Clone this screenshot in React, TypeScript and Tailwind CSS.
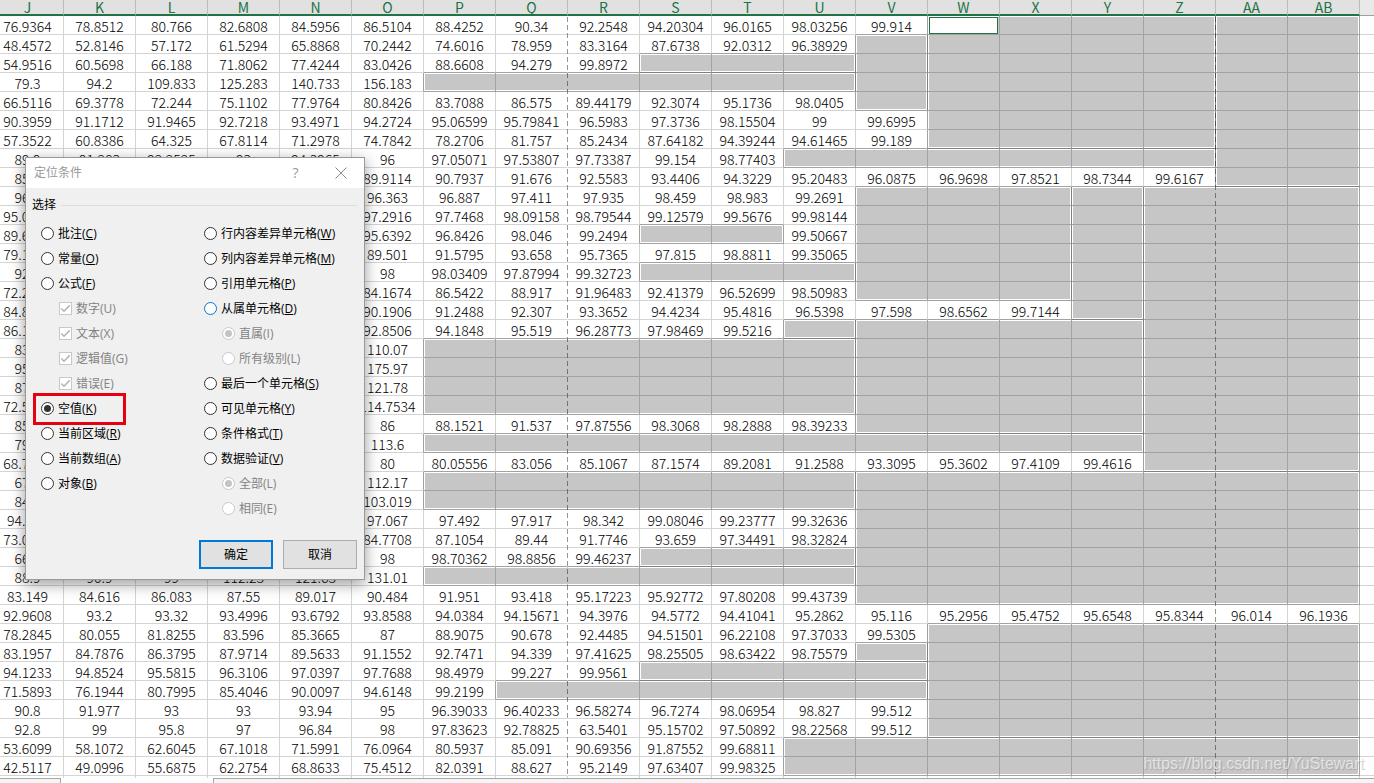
import React from 'react';
import clsx from 'clsx';

const COLUMNS = ['J', 'K', 'L', 'M', 'N', 'O', 'P', 'Q', 'R', 'S', 'T', 'U', 'V', 'W', 'X', 'Y', 'Z', 'AA', 'AB'];

// One line per sheet row, values separated by spaces, "-" marks an empty cell.
const ROWS: string[][] = `
76.9364 78.8512 80.766 82.6808 84.5956 86.5104 88.4252 90.34 92.2548 94.20304 96.0165 98.03256 99.914
48.4572 52.8146 57.172 61.5294 65.8868 70.2442 74.6016 78.959 83.3164 87.6738 92.0312 96.38929
54.9516 60.5698 66.188 71.8062 77.4244 83.0426 88.6608 94.279 99.8972
79.3 94.2 109.833 125.283 140.733 156.183
66.5116 69.3778 72.244 75.1102 77.9764 80.8426 83.7088 86.575 89.44179 92.3074 95.1736 98.0405
90.3959 91.1712 91.9465 92.7218 93.4971 94.2724 95.06599 95.79841 96.5983 97.3736 98.15504 99 99.6995
57.3522 60.8386 64.325 67.8114 71.2978 74.7842 78.2706 81.757 85.2434 87.64182 94.39244 94.61465 99.189
89.9 91.283 92.2525 93 94.3965 96 97.05071 97.53807 97.73387 99.154 98.77403
85.5 - - - - 89.9114 90.7937 91.676 92.5583 93.4406 94.3229 95.20483 96.0875 96.9698 97.8521 98.7344 99.6167
96.1 - - - - 96.363 96.887 97.411 97.935 98.459 98.983 99.2691
95.0164 - - - - 97.2916 97.7468 98.09158 98.79544 99.12579 99.5676 99.98144
89.6216 - - - - 95.6392 96.8426 98.046 99.2494 - - 99.50667
79.1085 - - - - 89.501 91.5795 93.658 95.7365 97.815 98.8811 99.35065
92.5 - - - - 98 98.03409 97.87994 99.32723
72.2944 - - - - 84.1674 86.5422 88.917 91.96483 92.41379 96.52699 98.50983
84.8996 - - - - 90.1906 91.2488 92.307 93.3652 94.4234 95.4816 96.5398 97.598 98.6562 99.7144
86.1796 - - - - 92.8506 94.1848 95.519 96.28773 97.98469 99.5216
83.6 - - - - 110.07
95.2 - - - - 175.97
87.4 - - - - 121.78
72.5934 - - - - 114.7534
85.5 - - - - 86 88.1521 91.537 97.87556 98.3068 98.2888 98.39233
79.8 - - - - 113.6
68.7526 - - - - 80 80.05556 83.056 85.1067 87.1574 89.2081 91.2588 93.3095 95.3602 97.4109 99.4616
67.2 - - - - 112.17
84.6 - - - - 103.019
94.942 - - - - 97.067 97.492 97.917 98.342 99.08046 99.23777 99.32636
73.0978 - - - - 84.7708 87.1054 89.44 91.7746 93.659 97.34491 98.32824
66.8 - - - - 98 98.70362 98.8856 99.46237
88.9 90.9 99 112.23 121.63 131.01
83.149 84.616 86.083 87.55 89.017 90.484 91.951 93.418 95.17223 95.92772 97.80208 99.43739
92.9608 93.2 93.32 93.4996 93.6792 93.8588 94.0384 94.15671 94.3976 94.5772 94.41041 95.2862 95.116 95.2956 95.4752 95.6548 95.8344 96.014 96.1936
78.2845 80.055 81.8255 83.596 85.3665 87 88.9075 90.678 92.4485 94.51501 96.22108 97.37033 99.5305
83.1957 84.7876 86.3795 87.9714 89.5633 91.1552 92.7471 94.339 97.41625 98.25505 98.63422 98.75579
94.1233 94.8524 95.5815 96.3106 97.0397 97.7688 98.4979 99.227 99.9561
71.5893 76.1944 80.7995 85.4046 90.0097 94.6148 99.2199
90.8 91.977 93 93 93.94 95 96.39033 96.40233 96.58274 96.7274 98.06954 98.827 99.512
92.8 99 95.8 97 96.84 98 97.83623 92.78825 63.5401 95.15702 97.50892 98.22568 99.512
53.6099 58.1072 62.6045 67.1018 71.5991 76.0964 80.5937 85.091 90.69356 91.87552 99.68811
42.5117 49.0996 55.6875 62.2754 68.8633 75.4512 82.0391 88.627 95.2149 97.63407 99.98325
`
  .trim()
  .split('\n')
  .map((line) => line.split(' ').map((v) => (v === '-' ? '' : v)));

// Selected blank ranges: first column, first row, last column, last row.
const RANGES: [string, number, string, number][] = [
  ['W', 1, 'Z', 7],
  ['AA', 1, 'AB', 9],
  ['V', 2, 'V', 5],
  ['S', 3, 'U', 3],
  ['P', 4, 'U', 4],
  ['U', 8, 'Z', 8],
  ['V', 10, 'X', 15],
  ['Y', 10, 'Y', 16],
  ['Z', 10, 'AB', 24],
  ['S', 12, 'T', 12],
  ['S', 14, 'U', 14],
  ['U', 17, 'U', 17],
  ['V', 17, 'Y', 22],
  ['P', 18, 'U', 21],
  ['P', 23, 'Y', 23],
  ['P', 25, 'U', 26],
  ['V', 25, 'AB', 31],
  ['S', 29, 'U', 29],
  ['P', 30, 'U', 30],
  ['W', 33, 'AB', 38],
  ['V', 34, 'V', 34],
  ['S', 35, 'V', 35],
  ['Q', 36, 'V', 36],
  ['U', 39, 'AB', 40],
];

function rangeAt(row: number, col: number): number {
  return RANGES.findIndex(
    ([c1, r1, c2, r2]) => row >= r1 && row <= r2 && col >= COLUMNS.indexOf(c1) && col <= COLUMNS.indexOf(c2),
  );
}

const PAGE_BREAKS = ['Q', 'Z'];

function Cell({ row, col }: { row: number; col: number }) {
  const own = rangeAt(row, col);
  const right = rangeAt(row, col + 1);
  const below = rangeAt(row + 1, col);
  const selected = own >= 0;
  const pageBreak = PAGE_BREAKS.includes(COLUMNS[col]);
  const active = row === 1 && COLUMNS[col] === 'W';

  let rightLine = 'border-r-[#d4d4d4]';
  if (own !== right && selected && right >= 0) rightLine = 'border-r-[#808080]';
  else if (pageBreak && own === right) rightLine = selected ? 'border-r-[#c6c6c6]' : 'border-r-white';
  else if (selected || right >= 0) rightLine = 'border-r-[#a2a2a2]';

  let bottomLine = 'border-b-[#d4d4d4]';
  if (own !== below && selected && below >= 0) bottomLine = 'border-b-[#808080]';
  else if (selected || below >= 0) bottomLine = 'border-b-[#a2a2a2]';

  return (
    <td className={clsx('border-r border-b p-0', rightLine, bottomLine, selected && 'bg-[#c6c6c6]')}>
      <div
        className={clsx(
          'h-[18px] border-white text-center leading-[18px] whitespace-nowrap',
          !selected && 'pt-px',
          selected && rangeAt(row - 1, col) !== own && 'border-t',
          selected && below !== own && 'border-b',
          selected && rangeAt(row, col - 1) !== own && 'border-l',
          selected && right !== own && 'border-r',
        )}
      >
        {active ? <div className="mr-px h-full border border-[#217346] bg-white" /> : ROWS[row - 1][col]}
      </div>
    </td>
  );
}

function Sheet() {
  return (
    <table className="-ml-2 w-[calc(100%+8px)] table-fixed border-separate border-spacing-0 font-['Noto_Sans_CJK_SC','Liberation_Sans',sans-serif] text-[14px] font-light text-black">
      <colgroup>
        {COLUMNS.map((c) => (
          <col key={c} className="w-[72px]" />
        ))}
        <col />
      </colgroup>
      <thead>
        <tr>
          {COLUMNS.map((c) => (
            <th
              key={c}
              scope="col"
              className="relative border-r border-b-2 border-r-[#bcbcbc] border-b-[#217346] bg-[#e1e1e1] p-0 font-normal text-[#217346]"
            >
              <div className="h-[14px] leading-[14px]">{c}</div>
              {PAGE_BREAKS.includes(c) && (
                <div className="absolute top-full -right-px mt-[3px] h-[758px] w-px bg-[repeating-linear-gradient(to_bottom,rgba(0,0,0,0.42)_0px_5px,transparent_5px_8px)]" />
              )}
            </th>
          ))}
          <td className="border-b border-[#9f9f9f] bg-[#e9e9e9] p-0" />
        </tr>
      </thead>
      <tbody>
        {ROWS.map((_, i) => (
          <tr key={i}>
            {COLUMNS.map((c, col) => (
              <Cell key={c} row={i + 1} col={col} />
            ))}
            <td className="border-b border-[#d4d4d4] p-0" />
          </tr>
        ))}
        <tr>
          {COLUMNS.map((c) => (
            <td key={c} className="h-[2px] border-r border-[#d4d4d4] p-0" />
          ))}
          <td className="p-0" />
        </tr>
      </tbody>
    </table>
  );
}

type Option = {
  text: string;
  accessKey: string;
  kind?: 'radio' | 'checkbox';
  group?: string;
  sub?: boolean;
  checked?: boolean;
  hot?: boolean;
};

const LEFT: Option[] = [
  { text: '批注', accessKey: 'C' },
  { text: '常量', accessKey: 'O' },
  { text: '公式', accessKey: 'F' },
  { text: '数字', accessKey: 'U', kind: 'checkbox', sub: true, checked: true },
  { text: '文本', accessKey: 'X', kind: 'checkbox', sub: true, checked: true },
  { text: '逻辑值', accessKey: 'G', kind: 'checkbox', sub: true, checked: true },
  { text: '错误', accessKey: 'E', kind: 'checkbox', sub: true, checked: true },
  { text: '空值', accessKey: 'K', checked: true },
  { text: '当前区域', accessKey: 'R' },
  { text: '当前数组', accessKey: 'A' },
  { text: '对象', accessKey: 'B' },
];

const RIGHT: Option[] = [
  { text: '行内容差异单元格', accessKey: 'W' },
  { text: '列内容差异单元格', accessKey: 'M' },
  { text: '引用单元格', accessKey: 'P' },
  { text: '从属单元格', accessKey: 'D', hot: true },
  { text: '直属', accessKey: 'I', sub: true, group: 'level', checked: true },
  { text: '所有级别', accessKey: 'L', sub: true, group: 'level' },
  { text: '最后一个单元格', accessKey: 'S' },
  { text: '可见单元格', accessKey: 'Y' },
  { text: '条件格式', accessKey: 'T' },
  { text: '数据验证', accessKey: 'V' },
  { text: '全部', accessKey: 'L', sub: true, group: 'scope', checked: true },
  { text: '相同', accessKey: 'E', sub: true, group: 'scope' },
];

function OptionRow({ text, accessKey, kind = 'radio', group = 'target', sub, checked, hot }: Option) {
  return (
    <label className={clsx('flex h-[25px] items-center gap-1', sub && 'pl-[18px] text-[#838383]')}>
      <span className="relative flex">
        <input
          type={kind}
          name={kind === 'radio' ? group : undefined}
          defaultChecked={checked}
          disabled={sub}
          className={clsx(
            'm-0 grid size-[13px] appearance-none place-content-center border bg-white',
            kind === 'radio' &&
              "rounded-full checked:before:block checked:before:size-[7px] checked:before:rounded-full checked:before:bg-[#333333] checked:before:content-[''] disabled:checked:before:bg-[#c4c4c4]",
            sub ? 'border-[#c8c8c8]' : hot ? 'border-[#0078d7]' : 'border-[#333333]',
          )}
        />
        {kind === 'checkbox' && (
          <svg viewBox="0 0 13 13" className="pointer-events-none absolute inset-0 size-[13px]" fill="none" stroke="#b4b4b4" strokeWidth="1.5">
            <path d="M2.3 6.4 L5 9.2 L10.7 3.4" />
          </svg>
        )}
      </span>
      <span className="whitespace-nowrap">
        {text}({sub ? accessKey : <u className="underline-offset-1">{accessKey}</u>})
      </span>
    </label>
  );
}

function Dialog() {
  return (
    <div
      role="dialog"
      aria-label="定位条件"
      className="absolute top-[157px] left-[25px] w-[340px] border border-[#999999] bg-[#f0f0f0] font-['Open_Sans','Noto_Sans_CJK_SC',sans-serif] text-[12px] leading-[16px] text-black shadow-[0_4px_14px_rgba(0,0,0,0.4)]"
    >
      <div className="flex h-[30px] items-center bg-white pr-px pl-2 text-[#999999]">
        <h1 className="flex-1">定位条件</h1>
        <button type="button" className="w-[45px] text-[14px]">
          ?
        </button>
        <button type="button" aria-label="关闭" className="flex w-[45px] justify-center">
          <svg viewBox="0 0 12 12" className="size-3" fill="none" stroke="#8c8c8c" strokeWidth="1">
            <path d="M0.5 0.5 L11.5 11.5 M11.5 0.5 L0.5 11.5" />
          </svg>
        </button>
      </div>
      <div className="pt-[9px] pr-[7px] pb-[10px] pl-[6px]">
        <div className="flex items-center gap-[5px]">
          <h2>选择</h2>
          <div className="h-px flex-1 bg-[#dcdcdc]" />
        </div>
        <div className="mt-2 flex pl-[9px]">
          <div className="w-[163px]">
            {LEFT.map((o) => (
              <OptionRow key={o.text} {...o} />
            ))}
          </div>
          <div>
            {RIGHT.map((o) => (
              <OptionRow key={o.text} {...o} />
            ))}
          </div>
        </div>
        <div className="mt-[19px] flex justify-end gap-[10px]">
          <button type="button" className="h-[29px] w-[74px] border-2 border-[#0078d7] bg-[#e1e1e1]">
            确定
          </button>
          <button type="button" className="h-[29px] w-[74px] border border-[#adadad] bg-[#e1e1e1]">
            取消
          </button>
        </div>
      </div>
      <div className="pointer-events-none absolute top-[235px] left-[7px] h-[32px] w-[93px] border-3 border-[#e60012]" />
    </div>
  );
}

export default function App() {
  return (
    <main className="relative flex min-h-screen flex-col overflow-hidden bg-white">
      <Sheet />
      <div className="flex min-h-[5px] flex-1">
        <div className="w-[61px] border-t border-r border-[#a6a6a6] bg-[#f5f5f5]" />
        <div className="w-[152px]" />
        <div className="flex-1 border-t border-l border-[#a6a6a6] bg-[#f5f5f5]" />
      </div>
      <Dialog />
      <p className="absolute right-[10px] bottom-[8px] font-['Liberation_Sans',sans-serif] text-[16px] leading-[22px] text-white/60 [text-shadow:1px_1px_1px_rgba(120,120,120,0.4)]">
        https://blog.csdn.net/YuStewart
      </p>
    </main>
  );
}
